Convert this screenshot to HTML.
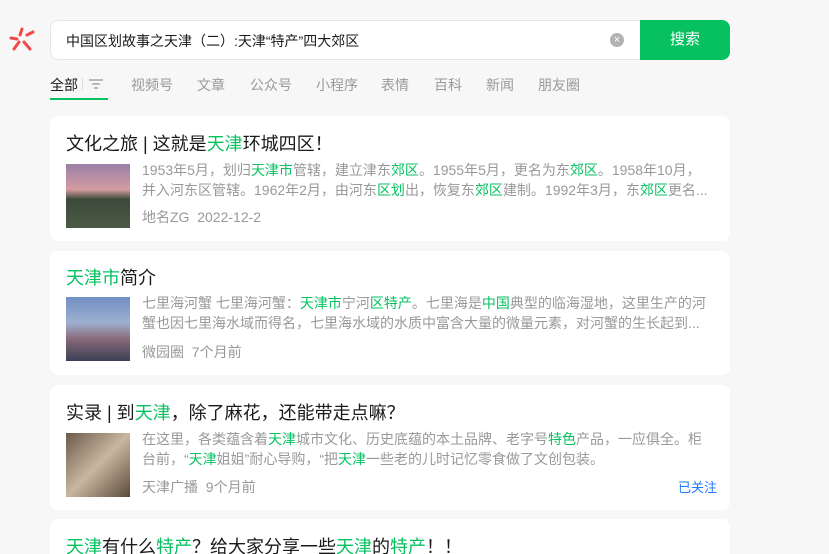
<!DOCTYPE html>
<html style="overflow:hidden;height:554px"><head><meta charset="utf-8"><style>
*{margin:0;padding:0;box-sizing:border-box}
body{width:829px;height:554px;overflow:hidden;background:#f7f7f7;font-family:"Liberation Sans","Noto Sans CJK SC",sans-serif;position:relative}
.a{position:absolute;white-space:nowrap}
.box{left:50px;top:20px;width:592px;height:40px;background:#fff;border:1px solid #e5e5e5;border-radius:8px 0 0 8px}
.btn{left:640px;top:20px;width:90px;height:40px;background:#07c160;border-radius:0 8px 8px 0;color:#fff;font-size:15px;text-align:center;line-height:40px}
.tab{top:75px;font-size:14px;color:#999}
.card{left:50px;width:680px;background:#fff;border-radius:8px}
.t{left:66px;font-size:18px;color:#1a1a1a}
.g{color:#07c160}
.d{left:142px;font-size:14px;color:#999;line-height:20px;width:572px;white-space:normal}
.m{left:142px;font-size:14px;color:#999}
.img{left:66px;width:64px;height:64px}
</style></head><body>
<svg class="a" style="left:8px;top:27px" width="28" height="26" viewBox="0 0 28 26"><g stroke="#f04b4b" stroke-width="3" stroke-linecap="round"><line x1="14" y1="2" x2="12" y2="8"/><line x1="3" y1="11" x2="9" y2="12"/><line x1="19" y1="8" x2="25" y2="5"/><line x1="11" y1="15" x2="6" y2="22"/><line x1="16" y1="15" x2="22" y2="22"/></g></svg>
<div class="a box"></div>
<div class="a" style="left:66px;top:31px;font-size:14px;color:#1a1a1a">中国区划故事之天津（二）:天津“特产”四大郊区</div>
<div class="a" style="left:610px;top:33px;width:14px;height:14px;border-radius:50%;background:#b2b2b2;color:#fff;font-size:11px;line-height:14px;text-align:center">×</div>
<div class="a btn">搜索</div>
<div class="a tab" style="left:50px;color:#1a1a1a">全部</div>
<div class="a" style="left:82px;top:78px;width:1px;height:12px;background:#ddd"></div>
<svg class="a" style="left:89px;top:78px" width="14" height="12"><g stroke="#999" stroke-width="1.3"><line x1="0" y1="2" x2="14" y2="2"/><line x1="3" y1="6" x2="11" y2="6"/><line x1="5" y1="10" x2="9" y2="10"/></g></svg>
<div class="a" style="left:50px;top:98px;width:58px;height:2px;background:#07c160"></div>
<div class="a tab" style="left:131px">视频号</div>
<div class="a tab" style="left:197px">文章</div>
<div class="a tab" style="left:250px">公众号</div>
<div class="a tab" style="left:316px">小程序</div>
<div class="a tab" style="left:381px">表情</div>
<div class="a tab" style="left:434px">百科</div>
<div class="a tab" style="left:486px">新闻</div>
<div class="a tab" style="left:538px">朋友圈</div>

<div class="a card" style="top:116px;height:125px"></div>
<div class="a t" style="top:130px">文化之旅 | 这就是<span class="g">天津</span>环城四区！</div>
<div class="a img" style="top:164px;background:linear-gradient(#9a7fa8 0%,#d49ca0 40%,#3c4a3a 55%,#4a5a44 100%)"></div>
<div class="a d" style="top:160px">1953年5月，划归<span class="g">天津市</span>管辖，建立津东<span class="g">郊区</span>。1955年5月，更名为东<span class="g">郊区</span>。1958年10月，并入河东区管辖。1962年2月，由河东<span class="g">区划</span>出，恢复东<span class="g">郊区</span>建制。1992年3月，东<span class="g">郊区</span>更名...</div>
<div class="a m" style="top:207px">地名ZG&nbsp;&nbsp;2022-12-2</div>

<div class="a card" style="top:251px;height:124px"></div>
<div class="a t" style="top:264px"><span class="g">天津市</span>简介</div>
<div class="a img" style="top:297px;background:linear-gradient(#6f8fc4 0%,#9fb0d0 40%,#8a6a7a 65%,#3a3f55 100%)"></div>
<div class="a d" style="top:293px">七里海河蟹 七里海河蟹：<span class="g">天津市</span>宁河<span class="g">区特产</span>。七里海是<span class="g">中国</span>典型的临海湿地，这里生产的河蟹也因七里海水域而得名，七里海水域的水质中富含大量的微量元素，对河蟹的生长起到...</div>
<div class="a m" style="top:342px">微园圈&nbsp;&nbsp;7个月前</div>

<div class="a card" style="top:385px;height:125px"></div>
<div class="a t" style="top:399px">实录 | 到<span class="g">天津</span>，除了麻花，还能带走点嘛？</div>
<div class="a img" style="top:433px;background:linear-gradient(135deg,#6a5a4a,#c8b8a0 50%,#5a4a3a)"></div>
<div class="a d" style="top:429px">在这里，各类蕴含着<span class="g">天津</span>城市文化、历史底蕴的本土品牌、老字号<span class="g">特色</span>产品，一应俱全。柜台前，“<span class="g">天津</span>姐姐”耐心导购，“把<span class="g">天津</span>一些老的儿时记忆零食做了文创包装。</div>
<div class="a m" style="top:477px">天津广播&nbsp;&nbsp;9个月前</div>
<div class="a" style="left:678px;top:477px;font-size:13px;color:#1e7bff">已关注</div>

<div class="a card" style="top:519px;height:60px"></div>
<div class="a t" style="top:533px"><span class="g">天津</span>有什么<span class="g">特产</span>？给大家分享一些<span class="g">天津</span>的<span class="g">特产</span>！！</div>
</body></html>
